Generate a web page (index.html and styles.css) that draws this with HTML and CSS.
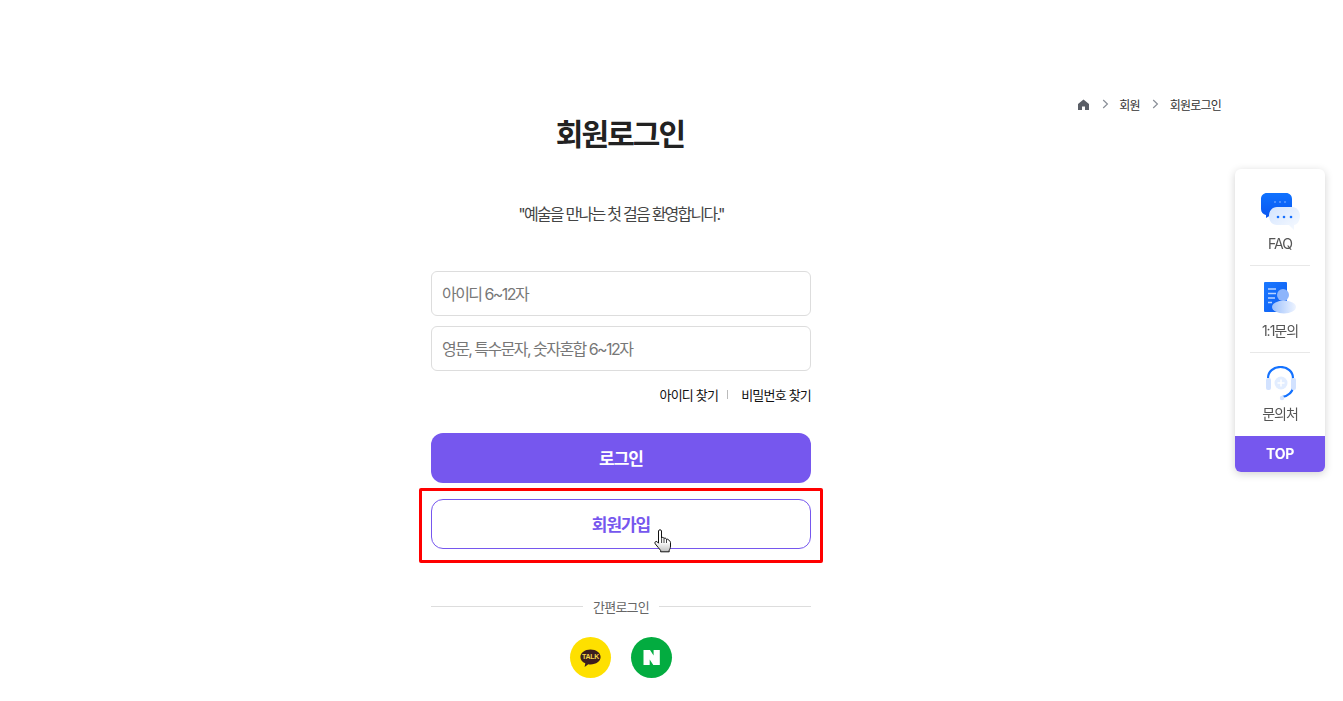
FILE: index.html
```html
<!DOCTYPE html>
<html lang="ko">
<head>
  <meta charset="UTF-8" />
  <meta name="viewport" content="width=device-width, initial-scale=1.0" />
  <title>회원로그인</title>
  <link rel="stylesheet" href="styles.css">
</head>
<body>
  <div class="wrap">
    <div class="breadcrumb">
      <svg class="home-icon" width="11" height="11" viewBox="0 0 11 11"><path d="M5.500 .5 L11 5 V11 H7 V7.500 H4 V11 H0 V5 Z" fill="#5a5e66"/></svg>
      <svg class="crumb-arrow first" width="7" height="10" viewBox="0 0 7 10"><path d="M1.200 1 L5.400 5 L1.200 9" fill="none" stroke="#8a8f98" stroke-width="1.200"/></svg>
      <span>회원</span>
      <svg class="crumb-arrow" width="7" height="10" viewBox="0 0 7 10"><path d="M1.200 1 L5.400 5 L1.200 9" fill="none" stroke="#8a8f98" stroke-width="1.200"/></svg>
      <span>회원로그인</span>
    </div>

    <div class="login-box">
      <h1>회원로그인</h1>
      <p class="welcome">"예술을 만나는 첫 걸음 환영합니다."</p>

      <form class="login-form">
        <input type="text" placeholder="아이디 6~12자" />
        <input type="password" class="pw" placeholder="영문, 특수문자, 숫자혼합 6~12자" />
        <div class="find-links">
          <a>아이디 찾기</a>
          <i></i>
          <a>비밀번호 찾기</a>
        </div>
        <button type="button" class="btn-login">로그인</button>
        <div class="join-row">
          <button type="button" class="btn-join">회원가입</button>
          <div class="mark"></div>
          <svg class="cursor" width="18" height="24" viewBox="0 0 18 24">
            <defs><linearGradient id="handFill" x1="0" y1="0" x2="0" y2="1"><stop offset=".55" stop-color="#fff"/><stop offset="1" stop-color="#bdbdbd"/></linearGradient></defs>
            <path d="M4.500 2 C4.500 .4 7.500 .4 7.500 2 V9 C8 8 9.800 8.200 10 9.500 C10.500 8.800 12.200 9 12.400 10.400 C13 9.800 14.800 10.200 15 11.600 C15.800 11.800 16.500 12.400 16.500 13.400 V17 C16.500 19 15.800 20.200 15.200 21.200 V22.800 H6.600 V21.400 C5 19.600 3.400 17.400 1.200 14.800 C.2 13.400 1.800 11.600 3.200 12.800 L4.500 14.200 Z" fill="url(#handFill)" stroke="#111" stroke-width="1"/>
            <path d="M7.600 9.200 V14 M10 9.600 V14 M12.500 10.400 V14" fill="none" stroke="#111" stroke-width=".8"/>
          </svg>
        </div>
      </form>

      <div class="sns-title"><span>간편로그인</span></div>
      <div class="sns-list">
        <a class="sns kakao">
          <svg width="41" height="41" viewBox="0 0 41 41">
            <path d="M20.500 12.500 C26.200 12.500 30.600 15.800 30.600 20 C30.600 24.200 26.200 27.400 20.500 27.400 C19.700 27.400 19 27.400 18.300 27.200 L14.600 30 L15.300 26.300 C12.200 25 10.400 22.700 10.400 20 C10.400 15.800 14.800 12.500 20.500 12.500 Z" fill="#3c1e1e"/>
            <text x="20.500" y="22.400" text-anchor="middle" class="talk">TALK</text>
          </svg>
        </a>
        <a class="sns naver">
          <svg width="41" height="41" viewBox="0 0 41 41"><path d="M12.500 13 H19 L22.600 18.600 V13 H28.800 V28 H22.300 L18.700 22.400 V28 H12.500 Z" fill="#fff"/></svg>
        </a>
      </div>
    </div>
  </div>

  <div class="quick-menu">
    <a class="quick-item">
      <svg width="40" height="38" viewBox="0 0 40 38">
        <defs>
          <linearGradient id="faqBlue" x1="0" y1="0" x2="0" y2="1"><stop offset="0" stop-color="#0f72ff"/><stop offset="1" stop-color="#0a55f0"/></linearGradient>
          <linearGradient id="faqPale" x1="0" y1="0" x2="1" y2="1"><stop offset="0" stop-color="#d3e4ff"/><stop offset="1" stop-color="#f8fbff"/></linearGradient>
        </defs>
        <path d="M7 0 H26 C29.500 0 32 2.500 32 6 V16 C32 19.500 29.500 22 26 22 H11 L6 25 V22 C3 21.500 1 19 1 16 V6 C1 2.500 3.500 0 7 0 Z" fill="url(#faqBlue)"/>
        <circle cx="15" cy="9" r="1" fill="#5f9bff"/><circle cx="20" cy="9" r="1" fill="#5f9bff"/><circle cx="25" cy="9" r="1" fill="#5f9bff"/>
        <path d="M17 14 H32 C37 14 40 18 40 23 C40 28 37 32 34 32 V37 L29 32 H17 C12 32 9 28 9 23 C9 18 12 14 17 14 Z" fill="url(#faqPale)"/>
        <circle cx="18" cy="24" r="1.300" fill="#1670ff"/><circle cx="24" cy="24" r="1.300" fill="#1670ff"/><circle cx="31" cy="24" r="1.300" fill="#1670ff"/>
      </svg>
      <span>FAQ</span>
    </a>
    <a class="quick-item">
      <svg width="40" height="38" viewBox="0 0 40 38">
        <defs>
          <linearGradient id="docBlue" x1="0" y1="0" x2="1" y2="1"><stop offset="0" stop-color="#1a78ff"/><stop offset="1" stop-color="#0d5df2"/></linearGradient>
          <linearGradient id="bodyPale" x1="0" y1="0" x2="1" y2="0"><stop offset="0" stop-color="#9cc0fc"/><stop offset="1" stop-color="#eef4ff"/></linearGradient>
        </defs>
        <rect x="4" y="1" width="23" height="30" rx="1" fill="url(#docBlue)"/>
        <path d="M8 8 H16 M8 12.500 H16 M8 17 H15 M8 21.500 H12" stroke="#b9d4ff" stroke-width="1.300"/>
        <circle cx="23" cy="14" r="6" fill="#8db5fb"/>
        <ellipse cx="24" cy="26" rx="12" ry="6.500" fill="url(#bodyPale)"/>
      </svg>
      <span>1:1문의</span>
    </a>
    <a class="quick-item">
      <svg width="40" height="38" viewBox="0 0 40 38">
        <path d="M8 12 C8 5.500 13.500 1 20.500 1 C27.500 1 33 5.500 33 12 V20 C33 26 28 30.500 22 31" fill="none" stroke="#1472ff" stroke-width="2.200"/>
        <rect x="6" y="12" width="5" height="12" rx="2" fill="#d2e2ff"/>
        <rect x="31" y="12" width="5" height="12" rx="2" fill="#d2e2ff"/>
        <circle cx="21" cy="17" r="6.500" fill="#e2edff"/>
        <path d="M21 13.500 V20.500 M17.500 17 H24.500" stroke="#fff" stroke-width="1.500"/>
        <circle cx="22" cy="32" r="2.200" fill="#d5e4ff"/>
      </svg>
      <span>문의처</span>
    </a>
    <a class="quick-top">TOP</a>
  </div>
</body>
</html>
```

FILE: styles.css
```css
* {
  box-sizing: border-box;
}

body {
  margin: 0;
  background: #fff;
  color: #222;
  font-family: Inter, "Noto Sans CJK KR", sans-serif;
  overflow: hidden;
}

.wrap {
  width: 1200px;
  margin-left: 21px;
  padding-top: 95px;
}

.breadcrumb {
  display: flex;
  justify-content: flex-end;
  align-items: center;
  height: 18px;
  font-size: 12px;
  letter-spacing: -0.8px;
  color: #333;
}

.home-icon {
  margin-right: 13px;
}

.crumb-arrow {
  margin-right: 11px;
}

.crumb-arrow.first {
  margin-right: 10px;
}

.breadcrumb span + .crumb-arrow {
  margin-left: 12px;
}

.login-box {
  width: 380px;
  margin: 0 auto;
}

h1 {
  margin: 0;
  padding: 1px 2px 0 0;
  height: 40px;
  line-height: 40px;
  font-size: 30px;
  font-weight: 700;
  letter-spacing: -1.9px;
  text-align: center;
  color: #222;
}

.welcome {
  margin: 49px 0 0;
  height: 24px;
  line-height: 24px;
  font-size: 16px;
  letter-spacing: -1.75px;
  text-align: center;
  color: #444;
}

.login-form {
  display: flex;
  flex-direction: column;
  margin-top: 45px;
}

input {
  width: 100%;
  height: 45px;
  padding: 0 10px;
  border: 1px solid #ddd;
  border-radius: 6px;
  font-family: inherit;
  font-size: 16px;
  letter-spacing: -1.55px;
}

input::placeholder {
  color: #777;
  opacity: 1;
}

.pw {
  margin-top: 10px;
}

.find-links {
  display: flex;
  justify-content: flex-end;
  align-items: center;
  gap: 8px;
  height: 18px;
  margin-top: 14px;
  font-size: 13px;
  font-weight: 400;
  letter-spacing: -0.8px;
  color: #111;
}

.find-links i {
  width: 1px;
  height: 9px;
  margin: 0 5px 0 1px;
  background: #bbb;
}

button {
  width: 100%;
  height: 50px;
  padding-bottom: 2px;
  border-radius: 12px;
  font-family: inherit;
  font-size: 17px;
  font-weight: 700;
  letter-spacing: -1.05px;
  cursor: pointer;
}

.btn-login {
  margin-top: 30px;
  border: none;
  background: #7657ee;
  color: #fff;
}

.join-row {
  position: relative;
  margin-top: 16px;
}

.btn-join {
  display: block;
  border: 1px solid #7657ee;
  background: #fff;
  color: #7657ee;
}

.mark {
  position: absolute;
  left: -12px;
  right: -12px;
  top: -11px;
  bottom: -14px;
  border: 3px solid #f00;
  border-radius: 2px;
}

.cursor {
  position: absolute;
  left: 223px;
  top: 30px;
}

.sns-title {
  display: flex;
  align-items: center;
  gap: 10px;
  height: 20px;
  margin-top: 47px;
  font-size: 13px;
  letter-spacing: -0.8px;
  color: #666;
}

.sns-title::before,
.sns-title::after {
  content: "";
  flex: 1;
  height: 1px;
  background: #ddd;
}

.sns-list {
  display: flex;
  justify-content: center;
  gap: 20px;
  margin-top: 21px;
}

.sns {
  display: block;
  width: 41px;
  height: 41px;
  border-radius: 50%;
}

.sns svg {
  display: block;
}

.kakao {
  background: #fee000;
}

.naver {
  background: #03ac40;
}

.talk {
  font-family: "Liberation Sans", sans-serif;
  font-size: 7px;
  font-weight: 700;
  letter-spacing: -0.3px;
  fill: #f5d84a;
}

.quick-menu {
  position: fixed;
  left: 1235px;
  top: 169px;
  width: 90px;
  border-radius: 6px;
  background: #fff;
  box-shadow: 0 2px 8px rgba(0, 0, 0, 0.18);
  overflow: hidden;
}

.quick-item {
  display: flex;
  flex-direction: column;
  align-items: center;
  height: 97px;
  margin: 0 15px;
  padding-top: 24px;
  border-bottom: 1px solid #e8e8e8;
  font-size: 14px;
  letter-spacing: -1px;
  color: #555;
}

.quick-item svg {
  display: block;
  flex: none;
}

.quick-item span {
  line-height: 18px;
  margin-top: 4px;
}

.quick-item:nth-child(2) {
  height: 87px;
  padding-top: 15px;
}

.quick-item:nth-child(2) span {
  margin-top: 3px;
}

.quick-item:nth-child(3) {
  height: 83px;
  padding-top: 13px;
  border-bottom: none;
}

.quick-item:nth-child(3) span {
  margin-top: 1px;
}

.quick-top {
  display: block;
  height: 36px;
  line-height: 36px;
  background: #7657ee;
  color: #fff;
  font-size: 14px;
  font-weight: 700;
  text-align: center;
  letter-spacing: -0.3px;
}
```
